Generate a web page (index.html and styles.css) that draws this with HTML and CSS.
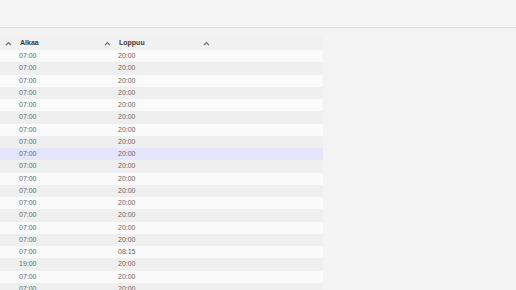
FILE: index.html
```html
<!DOCTYPE html>
<html>
<head>
<meta charset="utf-8">
<link rel="stylesheet" href="styles.css">
</head>
<body>
<div class="topbar"></div>
<div class="content">
  <div class="grid">
    <div class="row head">
      <div class="cell"><span class="chev"><svg viewBox="0 0 8 6" width="7" height="5"><path d="M1 5 L4 2 L7 5" fill="none" stroke="#666" stroke-width="1.4"/></svg></span><span class="lbl">Alkaa</span></div>
      <div class="cell"><span class="chev"><svg viewBox="0 0 8 6" width="7" height="5"><path d="M1 5 L4 2 L7 5" fill="none" stroke="#666" stroke-width="1.4"/></svg></span><span class="lbl">Loppuu</span></div>
      <div class="cell last"><span class="chev"><svg viewBox="0 0 8 6" width="7" height="5"><path d="M1 5 L4 2 L7 5" fill="none" stroke="#666" stroke-width="1.4"/></svg></span></div>
    </div>
    <div class="row"><div class="cell">07:00</div><div class="cell">20:00</div><div class="cell last"></div></div>
    <div class="row"><div class="cell">07:00</div><div class="cell">20:00</div><div class="cell last"></div></div>
    <div class="row"><div class="cell">07:00</div><div class="cell">20:00</div><div class="cell last"></div></div>
    <div class="row"><div class="cell">07:00</div><div class="cell">20:00</div><div class="cell last"></div></div>
    <div class="row"><div class="cell">07:00</div><div class="cell">20:00</div><div class="cell last"></div></div>
    <div class="row"><div class="cell">07:00</div><div class="cell">20:00</div><div class="cell last"></div></div>
    <div class="row"><div class="cell">07:00</div><div class="cell">20:00</div><div class="cell last"></div></div>
    <div class="row"><div class="cell">07:00</div><div class="cell">20:00</div><div class="cell last"></div></div>
    <div class="row sel"><div class="cell">07:00</div><div class="cell">20:00</div><div class="cell last"></div></div>
    <div class="row"><div class="cell">07:00</div><div class="cell">20:00</div><div class="cell last"></div></div>
    <div class="row"><div class="cell">07:00</div><div class="cell">20:00</div><div class="cell last"></div></div>
    <div class="row"><div class="cell">07:00</div><div class="cell">20:00</div><div class="cell last"></div></div>
    <div class="row"><div class="cell">07:00</div><div class="cell">20:00</div><div class="cell last"></div></div>
    <div class="row"><div class="cell">07:00</div><div class="cell">20:00</div><div class="cell last"></div></div>
    <div class="row"><div class="cell">07:00</div><div class="cell">20:00</div><div class="cell last"></div></div>
    <div class="row"><div class="cell">07:00</div><div class="cell">20:00</div><div class="cell last"></div></div>
    <div class="row"><div class="cell">07:00</div><div class="cell">08:15</div><div class="cell last"></div></div>
    <div class="row"><div class="cell">19:00</div><div class="cell">20:00</div><div class="cell last"></div></div>
    <div class="row"><div class="cell">07:00</div><div class="cell">20:00</div><div class="cell last"></div></div>
    <div class="row"><div class="cell">07:00</div><div class="cell">20:00</div><div class="cell last"></div></div>
  </div>
</div>
</body>
</html>
```
FILE: styles.css
```css
html, body {
  margin: 0;
  padding: 0;
  background: #f3f3f3;
  font-family: "Liberation Sans", Arial, sans-serif;
  overflow: hidden;
  height: 290px;
}
.topbar {
  height: 27px;
  background: #f5f5f5;
  border-bottom: 1px solid #dedede;
}
.content {
  padding-top: 8px;
}
.grid {
  width: 323px;
  display: flex;
  flex-direction: column;
}
.row {
  display: grid;
  grid-template-columns: 99px 99px 1fr;
  height: 12.25px;
  align-items: center;
  font-size: 7px;
  color: #666;
  background: #fafafa;
}
.row:nth-child(odd) {
  background: #efefef;
}
.row.head {
  height: 14px;
  background: #f1f1f1;
  color: #3a3a3a;
  font-weight: bold;
}
.row.sel {
  background: #e4e4fa;
}
.cell {
  padding-left: 19px;
  white-space: nowrap;
  line-height: 8px;
}
.head .cell {
  padding-left: 5px;
  display: flex;
  align-items: center;
}
.chev {
  display: inline-flex;
  width: 7px;
  margin-right: 8px;
}
.chev svg { display: block; }
```
